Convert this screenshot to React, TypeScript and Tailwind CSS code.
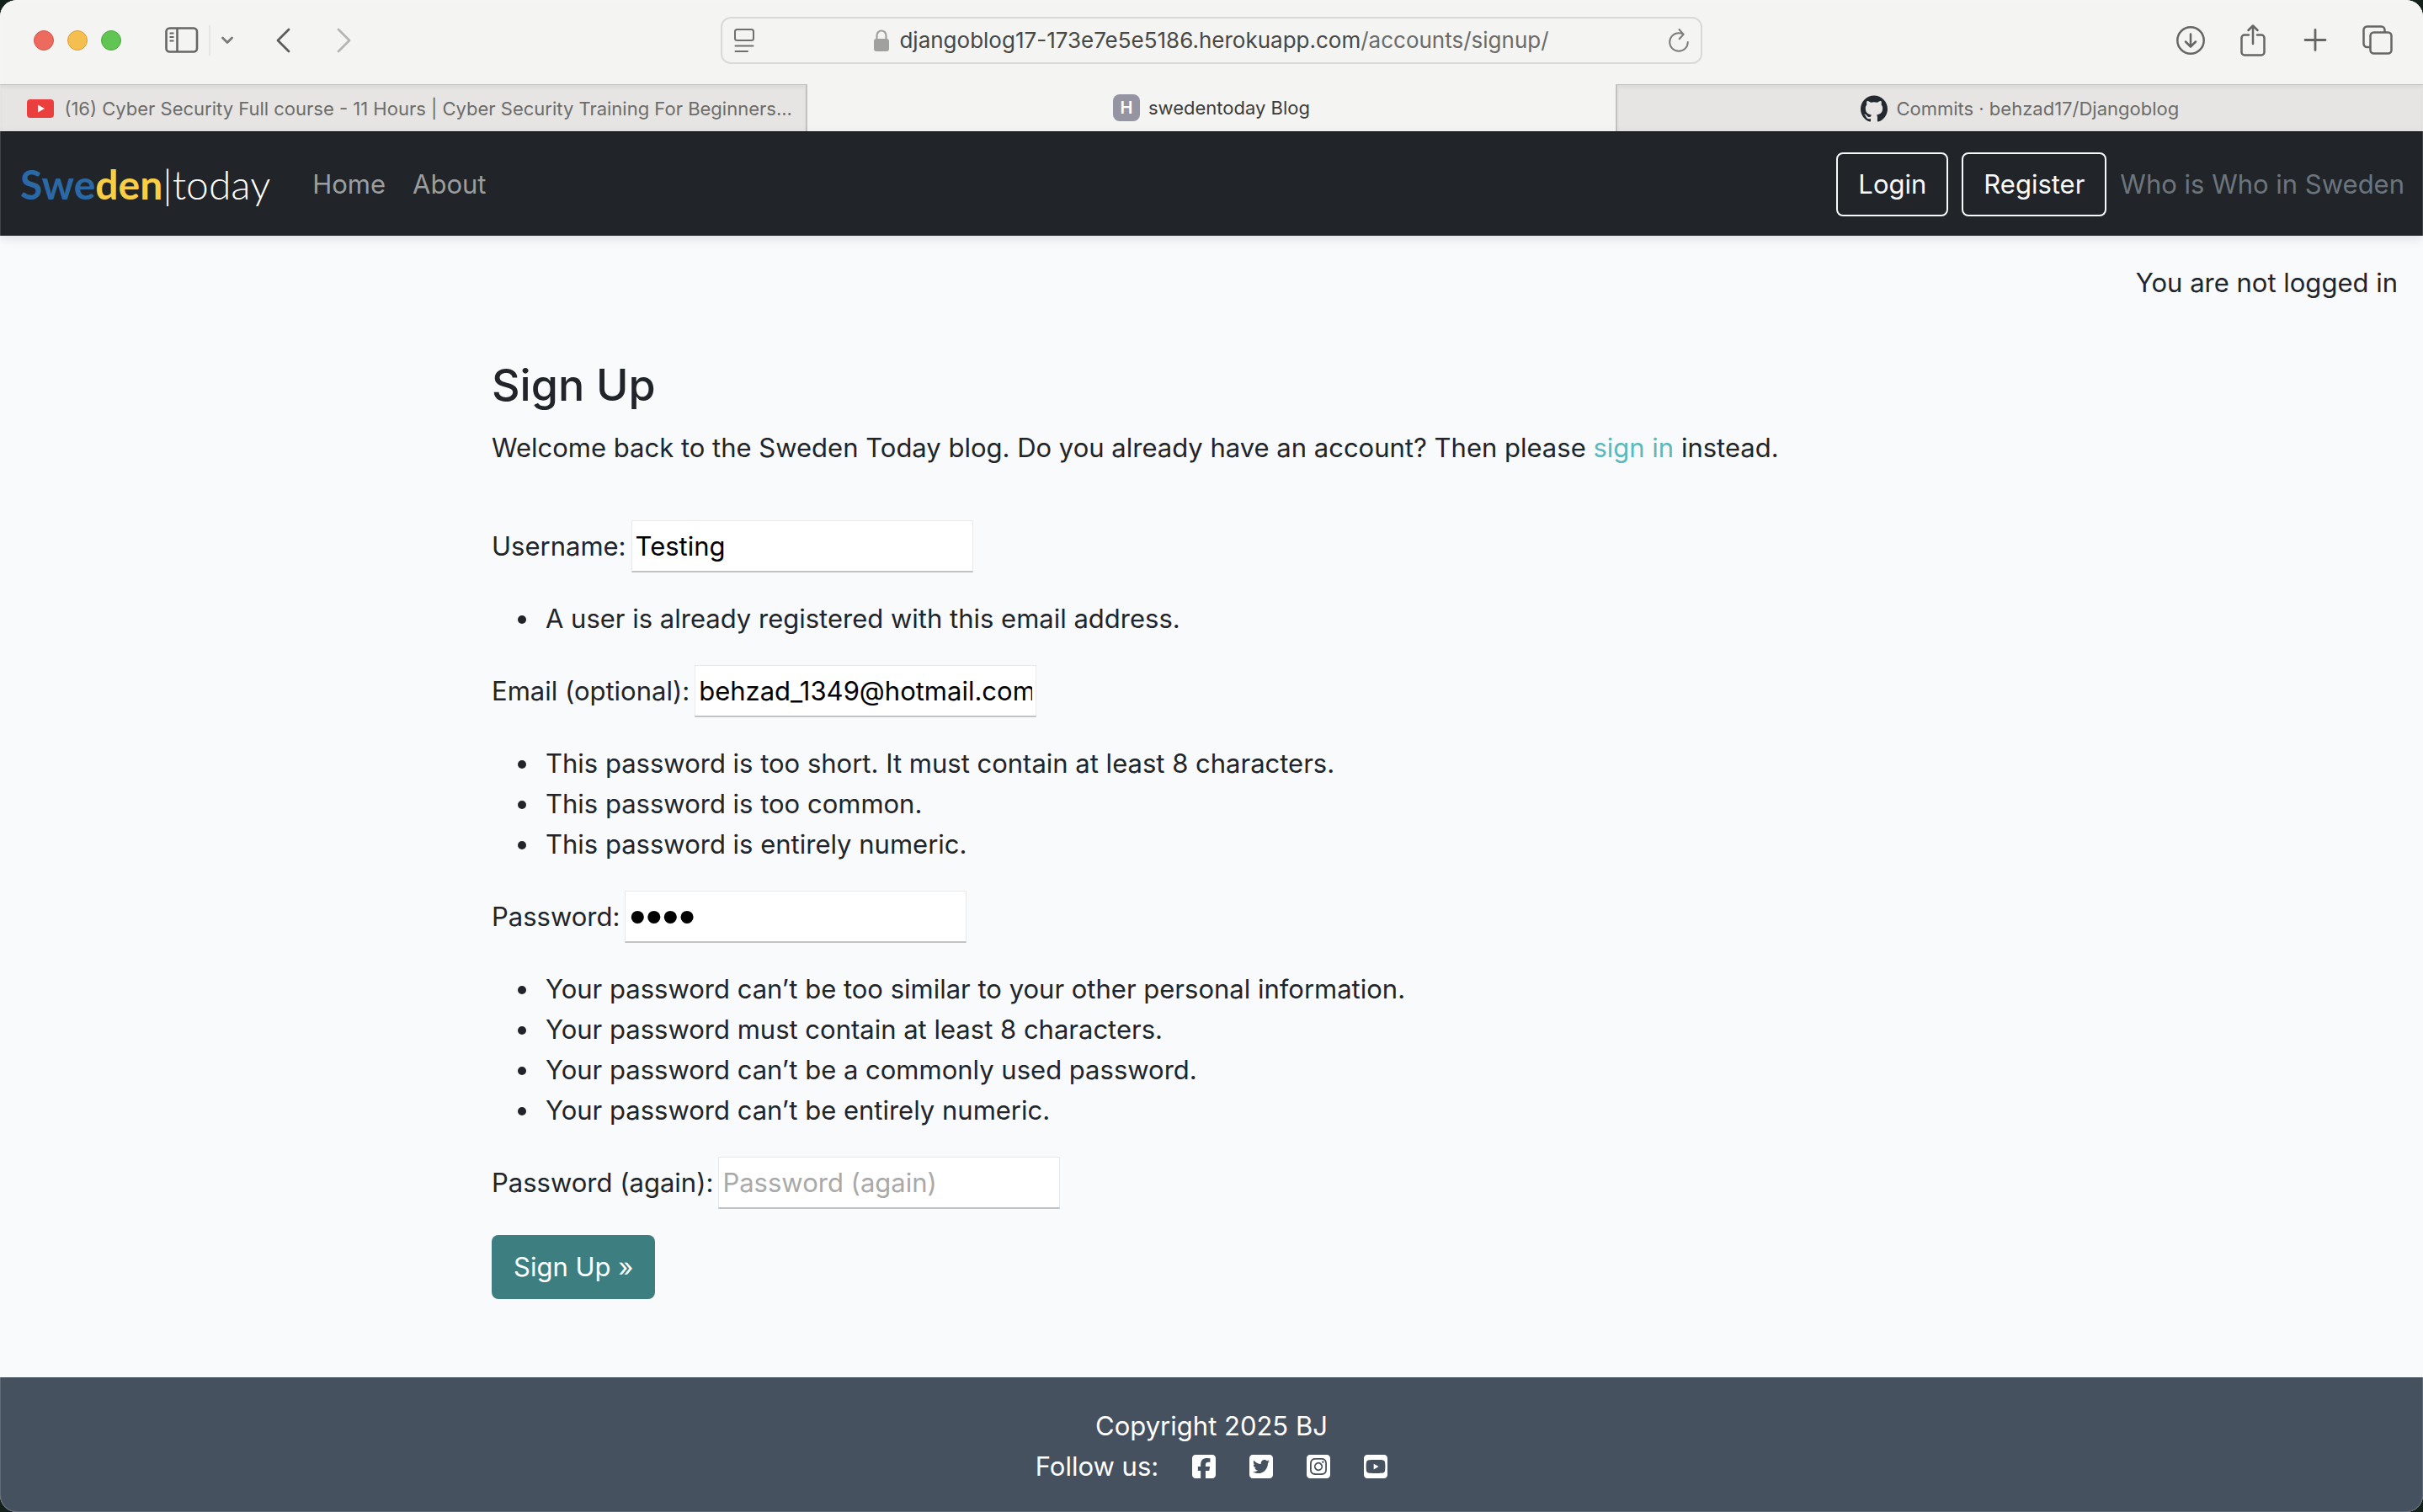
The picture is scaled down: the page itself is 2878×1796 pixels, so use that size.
import React, { useState } from "react";
import { FaSquareFacebook, FaSquareTwitter, FaSquareInstagram, FaSquareYoutube } from "react-icons/fa6";
import { SiGithub } from "react-icons/si";

const ICON = "#666664";

function Toolbar() {
  return (
    <header className="grid h-[100px] grid-cols-[1fr_1166px_1fr] items-center bg-[#f4f4f2] pb-1">
      <div className="flex items-center pl-10">
        <div className="flex gap-4">
          <button aria-label="Close" className="size-6 rounded-full border border-[#d5574c] bg-[#ec6a5e]" />
          <button aria-label="Minimise" className="size-6 rounded-full border border-[#d9a03c] bg-[#f4bf4f]" />
          <button aria-label="Zoom" className="size-6 rounded-full border border-[#4fa73f] bg-[#61c554]" />
        </div>
        <button aria-label="Show sidebar" className="ml-13">
          <svg width="40" height="32" viewBox="0 0 40 32" fill="none" stroke={ICON} strokeWidth="2.6">
            <rect x="1.5" y="1.5" width="36.500" height="28" rx="4" />
            <path d="M14.500 1.500v28" />
            <path d="M5.500 7.500h5M5.500 12h5M5.500 16.500h5" strokeWidth="1.800" />
          </svg>
        </button>
        <div className="ml-3 h-9 w-0.5 bg-[#e6e6e4]" />
        <button aria-label="Tab groups" className="ml-3">
          <svg width="16" height="10" viewBox="0 0 16 10" fill="none" stroke="#7a7a78" strokeWidth="2.8" strokeLinecap="round" strokeLinejoin="round">
            <path d="M2.500 2l5.500 5.500L13.500 2" />
          </svg>
        </button>
        <button aria-label="Back" className="ml-12">
          <svg width="20" height="32" viewBox="0 0 20 32" fill="none" stroke="#5c5c5a" strokeWidth="2.800" strokeLinecap="round" strokeLinejoin="round">
            <path d="M17 3L4 16l13 13" />
          </svg>
        </button>
        <button aria-label="Forward" className="ml-13">
          <svg width="20" height="32" viewBox="0 0 20 32" fill="none" stroke="#b4b4b2" strokeWidth="2.800" strokeLinecap="round" strokeLinejoin="round">
            <path d="M4 3l13 13L4 29" />
          </svg>
        </button>
      </div>
      <div className="flex h-14 items-center justify-between rounded-xl border-2 border-[#d9d9d7] px-3.5">
        <button aria-label="Page menu">
          <svg width="24" height="28" viewBox="0 0 24 28" fill="none" stroke="#6f6f6d" strokeWidth="2" strokeLinecap="round">
            <rect x="1" y="1" width="22" height="13" rx="2.500" />
            <path d="M1.500 20.500h21M1.500 27h14.500" />
          </svg>
        </button>
        <div className="flex items-center gap-3 text-[26px] leading-8 text-[#474745]">
          <svg width="18" height="26" viewBox="0 0 18 26" aria-hidden="true">
            <rect x="0" y="11" width="18" height="15" rx="3" fill="#a0a09e" />
            <path d="M3.500 12V7a5.500 5.500 0 0 1 11 0v5" fill="none" stroke="#a0a09e" strokeWidth="2.200" />
          </svg>
          <span>djangoblog17-173e7e5e5186.herokuapp.com<span className="text-[#6b6b69]">/accounts/signup/</span></span>
        </div>
        <button aria-label="Reload">
          <svg width="24" height="28" viewBox="0 0 24 28" fill="none" stroke="#7c7c7a" strokeWidth="2" strokeLinecap="round" strokeLinejoin="round">
            <path d="M22.800 16A10.800 10.800 0 1 1 12 5.200q3 0 5.500 1.500M12.500 1l5.200 5.800-5 5.400" />
          </svg>
        </button>
      </div>
      <div className="flex items-center justify-end gap-[38px] pr-9">
        <button aria-label="Downloads">
          <svg width="36" height="36" viewBox="0 0 36 36" fill="none" stroke={ICON} strokeWidth="2.500" strokeLinecap="round" strokeLinejoin="round">
            <circle cx="18" cy="18" r="15.700" />
            <path d="M18 10.500v14.500M12 19.500l6 6 6-6" />
          </svg>
        </button>
        <button aria-label="Share">
          <svg width="36" height="40" viewBox="0 0 36 40" fill="none" stroke={ICON} strokeWidth="2.500" strokeLinecap="round" strokeLinejoin="round">
            <path d="M13 13.500H8a3.500 3.500 0 0 0-3.500 3.500v17A3.500 3.500 0 0 0 8 37.500h20a3.500 3.500 0 0 0 3.500-3.500V17a3.500 3.500 0 0 0-3.500-3.500h-5M18 24V3M12.500 8L18 2.500 23.500 8" />
          </svg>
        </button>
        <button aria-label="New tab">
          <svg width="36" height="30" viewBox="0 0 36 30" fill="none" stroke={ICON} strokeWidth="2.800" strokeLinecap="round">
            <path d="M18 2.500v24M6 14.500h24" />
          </svg>
        </button>
        <button aria-label="Tab overview">
          <svg width="36" height="36" viewBox="0 0 36 36" fill="none" stroke={ICON} strokeWidth="2.500">
            <rect x="9.500" y="8.500" width="25" height="25" rx="4" />
            <path d="M9.500 26H5.500A4 4 0 0 1 1.500 22V5.500A4 4 0 0 1 5.500 1.500h17A4 4 0 0 1 26.500 5.500v3" />
          </svg>
        </button>
      </div>
    </header>
  );
}

function TabBar() {
  const idle =
    "flex items-center justify-center border-t border-[#c2c2c0] bg-[#e6e5e3] text-[#6c6c6a] shadow-[inset_0_3px_4px_rgba(0,0,0,0.05)]";
  return (
    <nav aria-label="Tabs" className="grid h-[57px] grid-cols-3 border-b border-black bg-[#f4f4f2] text-[22px] leading-7">
      <button className={idle + " gap-3 border-r-2 pl-4"}>
        <svg width="32" height="22" viewBox="0 0 32 22" aria-hidden="true">
          <rect width="32" height="22" rx="4" fill="#ea3f3d" />
          <path d="M13 6.500v9l8-4.500z" fill="#fff" />
        </svg>
        <span>(16) Cyber Security Full course - 11 Hours | Cyber Security Training For Beginners...</span>
      </button>
      <button className="flex items-center justify-center gap-2.5 text-[#3c3c3a]">
        <span className="flex size-8 items-center justify-center rounded-lg bg-[#9594a2] text-xl font-semibold text-white">H</span>
        <span>swedentoday Blog</span>
      </button>
      <button className={idle + " gap-2.5 border-l-2"}>
        <SiGithub className="size-8 text-[#24292f]" aria-hidden="true" />
        <span>Commits · behzad17/Djangoblog</span>
      </button>
    </nav>
  );
}

function SiteNav() {
  const outline = "flex h-19 items-center rounded-lg border-2 border-[#f8f9fa] px-6 text-[#f8f9fa]";
  return (
    <nav aria-label="Site" className="flex h-[123px] items-center bg-[#212529] pl-6 pr-5.5 shadow-[0_4px_12px_rgba(0,0,0,0.1)]">
      <a href="#" className="font-['Lato',sans-serif] text-[48px] leading-[60px]">
        <span className="font-bold text-[#2a69a6]">Swe</span>
        <span className="font-bold text-[#f8ce46]">den</span>
        <span className="font-light text-white">|today</span>
      </a>
      <div className="ml-12.5 flex flex-1 gap-8 text-[#9b9d9f]">
        <a href="#">Home</a>
        <a href="#">About</a>
      </div>
      <div className="flex items-center gap-4">
        <a href="#" className={outline}>Login</a>
        <a href="#" className={outline}>Register</a>
        <span className="text-[#6c757d]">Who is Who in Sweden</span>
      </div>
    </nav>
  );
}

type FieldProps = {
  id: string;
  label: string;
  type: string;
  initial?: string;
  placeholder?: string;
};

function Field({ id, label, type, initial = "", placeholder }: FieldProps) {
  const [value, setValue] = useState(initial);
  const masked = type === "password" && value !== "";
  return (
    <div className="flex items-center gap-1.5">
      <label htmlFor={id}>{label}</label>
      <input
        id={id}
        type={type}
        value={value}
        placeholder={placeholder}
        onChange={(e) => setValue(e.target.value)}
        className={
          "h-[62px] w-[406px] border border-b-2 border-[#e8e9eb] border-b-[#c2c3c5] bg-white px-1 text-black placeholder:text-[#a9a9a9]" +
          (masked ? " font-['Liberation_Sans',sans-serif] text-[56px]" : "")
        }
      />
    </div>
  );
}

function Notes({ items }: { items: string[] }) {
  return (
    <ul className="list-disc pl-[58px]">
      {items.map((t) => (
        <li key={t} className="pl-1.5">{t}</li>
      ))}
    </ul>
  );
}

export default function App() {
  return (
    <div className="min-h-screen bg-[#14201a]">
      <div className="relative flex min-h-screen flex-col overflow-hidden rounded-[20px] bg-[#f9fafc] font-['Inter',sans-serif] text-[31px] leading-12 text-[#212529]">
        <Toolbar />
        <TabBar />
        <SiteNav />
        <p className="px-7.5 pt-8 text-right">You are not logged in</p>
        <main className="mx-auto w-full max-w-[1710px] flex-1 pb-12">
          <h1 className="mt-16 text-[52px] font-medium leading-[68px]">Sign Up</h1>
          <p className="mt-4">
            Welcome back to the Sweden Today blog. Do you already have an account? Then please{" "}
            <a href="#" className="text-[#5bb9bc]">sign in</a> instead.
          </p>
          <form className="mt-[62px] flex flex-col items-start gap-[31px]" onSubmit={(e) => e.preventDefault()}>
            <Field id="username" label="Username:" type="text" initial="Testing" />
            <Notes items={["A user is already registered with this email address."]} />
            <Field id="email" label="Email (optional):" type="email" initial="behzad_1349@hotmail.com" />
            <Notes
              items={[
                "This password is too short. It must contain at least 8 characters.",
                "This password is too common.",
                "This password is entirely numeric.",
              ]}
            />
            <Field id="password1" label="Password:" type="password" initial="1234" />
            <Notes
              items={[
                "Your password can’t be too similar to your other personal information.",
                "Your password must contain at least 8 characters.",
                "Your password can’t be a commonly used password.",
                "Your password can’t be entirely numeric.",
              ]}
            />
            <Field id="password2" label="Password (again):" type="password" placeholder="Password (again)" />
            <button type="submit" className="h-19 rounded-lg bg-[#3d7f80] px-[26px] text-white">Sign Up »</button>
          </form>
        </main>
        <footer className="flex h-40 flex-col items-center bg-[#465160] pt-[34px] text-white">
          <p>Copyright 2025 BJ</p>
          <div className="flex items-center gap-10">
            <span>Follow us:</span>
            <a href="#" aria-label="Facebook"><FaSquareFacebook className="h-8 w-7" /></a>
            <a href="#" aria-label="Twitter"><FaSquareTwitter className="h-8 w-7" /></a>
            <a href="#" aria-label="Instagram"><FaSquareInstagram className="h-8 w-7" /></a>
            <a href="#" aria-label="YouTube"><FaSquareYoutube className="h-8 w-7" /></a>
          </div>
        </footer>
        <div className="pointer-events-none absolute inset-0 rounded-[20px] border border-white/15" />
      </div>
    </div>
  );
}
